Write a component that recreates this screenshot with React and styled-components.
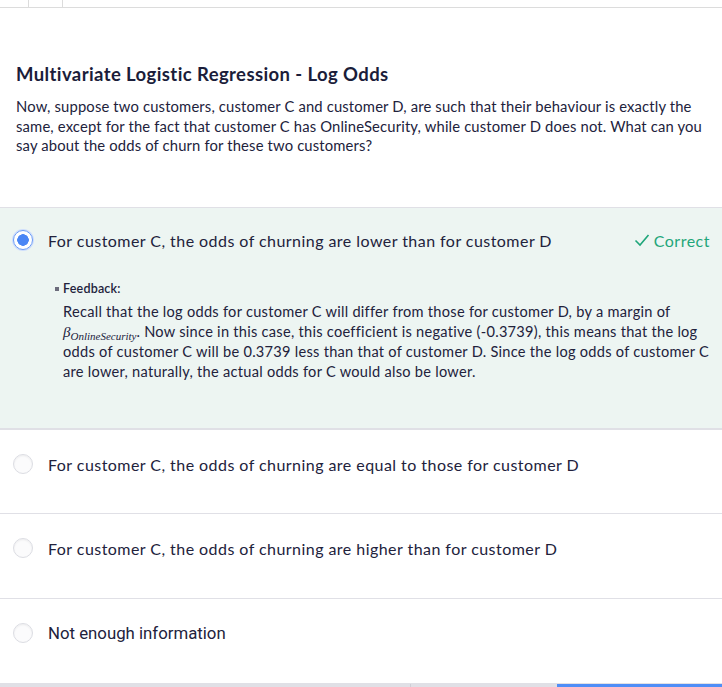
import React from 'react'
import styled, { createGlobalStyle } from 'styled-components';

const GlobalStyle = createGlobalStyle`
  body {
    margin: 0;
    background: #fff;
    font-family: Lato, "Open Sans", sans-serif;
    color: #22223c;
  }
`;

const options = [
  { text: 'For customer C, the odds of churning are lower than for customer D', selected: true },
  { text: 'For customer C, the odds of churning are equal to those for customer D' },
  { text: 'For customer C, the odds of churning are higher than for customer D' },
  { text: 'Not enough information', narrow: true },
];

function App() {
  return (
    <Page>
      <GlobalStyle />
      <TopStrip>
        <TopCell w={28} />
        <TopCell w={33} />
      </TopStrip>
      <Question>
        <Title>Multivariate Logistic Regression - Log Odds</Title>
        <Prompt>
          Now, suppose two customers, customer C and customer D, are such that their behaviour is exactly the<br />
          same, except for the fact that customer C has OnlineSecurity, while customer D does not. What can you<br />
          say about the odds of churn for these two customers?
        </Prompt>
      </Question>
      <OptionList>
        {options.map((o, i) => (
          <Option key={i} selected={o.selected}>
            <OptionRow>
              <Radio selected={o.selected} />
              <OptionText narrow={o.narrow}>{o.text}</OptionText>
              {o.selected && (
                <Correct>
                  <svg width="16" height="14" viewBox="0 0 16 14">
                    <path d="M1.5 7.5 L6 12 L14.5 2" fill="none" stroke="#1fa67a" strokeWidth="1.6" />
                  </svg>
                  Correct
                </Correct>
              )}
            </OptionRow>
            {o.selected && (
              <Feedback>
                <FeedbackLabel>Feedback:</FeedbackLabel>
                <FeedbackText>
                  Recall that the log odds for customer C will differ from those for customer D, by a margin of<br />
                  <Beta>β<sub>OnlineSecurity</sub></Beta>. Now since in this case, this coefficient is negative (-0.3739), this means that the log<br />
                  odds of customer C will be 0.3739 less than that of customer D. Since the log odds of customer C<br />
                  are lower, naturally, the actual odds for C would also be lower.
                </FeedbackText>
              </Feedback>
            )}
          </Option>
        ))}
      </OptionList>
      <BottomBar>
        <BottomCell />
        <BottomCell />
        <BottomActive />
      </BottomBar>
    </Page>
  )
}

const Page = styled.div`
  width: 722px;
  height: 687px;
  overflow: hidden;
  display: flex;
  flex-direction: column;
`;
const TopStrip = styled.div`
  height: 7px;
  border-bottom: 1px solid #dcdcdc;
  display: flex;
`;
const TopCell = styled.div`
  width: ${p => p.w}px;
  border-right: 1px solid #dcdcdc;
`;
const Question = styled.div`
  padding: 54px 16px 0;
  height: 199px;
  box-sizing: border-box;
`;
const Title = styled.h2`
  margin: 0 0 11px;
  font-size: 18.5px;
  letter-spacing: 0.4px;
  font-weight: 700;
  color: #1b1d3a;
  line-height: 24px;
  white-space: nowrap;
`;
const Prompt = styled.p`
  margin: 0;
  font-size: 14.8px;
  letter-spacing: 0.15px;
  line-height: 19.5px;
  color: #22223c;
  white-space: nowrap;
`;
const OptionList = styled.div`
  display: flex;
  flex-direction: column;
`;
const Option = styled.div`
  border-top: 1px solid #e0e0e6;
  border-bottom: 1px solid #e0e0e6;
  margin-bottom: -1px;
  background: ${p => (p.selected ? '#edf5f2' : '#fff')};
  height: ${p => (p.selected ? '222px' : '86px')};
  box-sizing: border-box;
  padding: ${p => (p.selected ? '21px' : '23px')} 12px 0 13px;
  &:nth-child(2) { border-top: 2px solid #e0e0e6; }
`;
const OptionRow = styled.div`
  display: flex;
  align-items: center;
  height: 22px;
`;
const Radio = styled.span`
  width: 20px;
  height: 20px;
  border-radius: 50%;
  box-sizing: border-box;
  flex-shrink: 0;
  margin-right: 15px;
  border: ${p => (p.selected ? '1.5px solid #6b9bf7' : '1px solid #dcdde3')};
  background: ${p => (p.selected ? 'radial-gradient(circle, #4a86f5 0 5.5px, #fff 6px)' : '#fbfbfc')};
  box-shadow: ${p => (p.selected ? '0 0 0 1px #cfdefc' : 'inset 0 1px 2px rgba(0,0,0,0.06)')};
`;
const OptionText = styled.span`
  flex: 1;
  white-space: nowrap;
  font-size: ${p => (p.narrow ? '16.8px' : '16px')};
  letter-spacing: ${p => (p.narrow ? '0' : '0.45px')};
  font-family: ${p => (p.narrow ? '"Roboto", sans-serif' : 'Lato, sans-serif')};
  color: #22223c;
`;
const Correct = styled.span`
  display: flex;
  align-items: center;
  gap: 4px;
  color: #1fa67a;
  font-size: 16px;
  letter-spacing: 0.5px;
`;
const Feedback = styled.div`
  padding: 30px 0 0 50px;
`;
const FeedbackLabel = styled.div`
  font-size: 12.5px;
  font-weight: 600;
  line-height: 15px;
  letter-spacing: 0.2px;
  color: #22223c;
  position: relative;
  &::before {
    content: '';
    position: absolute;
    left: -8px;
    top: 6px;
    width: 4px;
    height: 4px;
    background: #6c6c7c;
  }
`;
const FeedbackText = styled.p`
  margin: 6px 0 0;
  font-size: 14.6px;
  letter-spacing: 0.27px;
  line-height: 19.5px;
  color: #22223c;
  white-space: nowrap;
`;
const Beta = styled.span`
  font-family: "Liberation Serif", serif;
  font-style: italic;
  font-size: 15px;
  letter-spacing: 0;
  sub {
    font-size: 11px;
    vertical-align: -3px;
    line-height: 0;
  }
`;
const BottomBar = styled.div`
  margin-top: auto;
  height: 3px;
  display: flex;
  background: #e0e0e6;
`;
const BottomCell = styled.div`
  &:first-child { width: 410px; border-right: 1px solid #cfcfd6; }
  &:nth-child(2) { width: 146px; }
`;
const BottomActive = styled.div`
  flex: 1;
  background: #4f8ef7;
`;

export default App
